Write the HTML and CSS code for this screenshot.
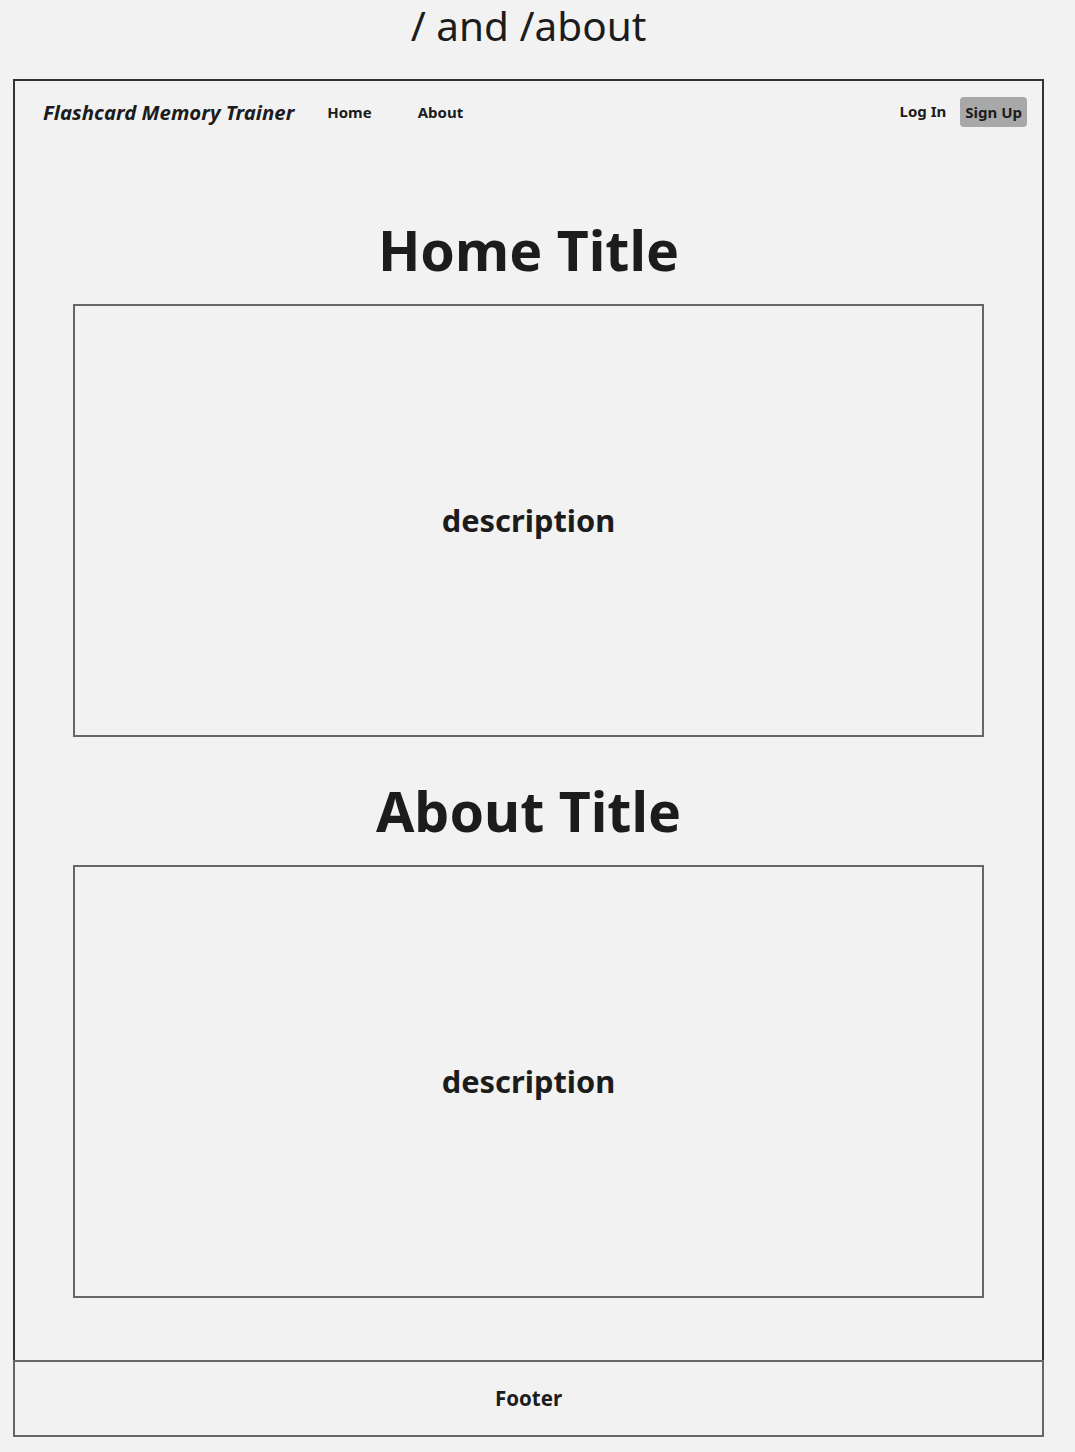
FILE: index.html
```html
<!DOCTYPE html>
<html>
<head>
<meta charset="utf-8">
<link rel="stylesheet" href="styles.css">
</head>
<body>
<div class="page-label">/ and /about</div>
<div class="frame">
  <nav class="nav">
    <div class="nav-left">
      <span class="brand">Flashcard Memory Trainer</span>
      <a class="nav-link">Home</a>
      <a class="nav-link">About</a>
    </div>
    <div class="nav-right">
      <a class="login">Log In</a>
      <a class="signup">Sign Up</a>
    </div>
  </nav>
  <main class="main">
    <section class="section">
      <h2 class="title">Home Title</h2>
      <div class="box">description</div>
    </section>
    <section class="section">
      <h2 class="title">About Title</h2>
      <div class="box">description</div>
    </section>
  </main>
</div>
<footer class="footer">Footer</footer>
</body>
</html>
```
FILE: styles.css
```css
html, body {
  margin: 0;
  padding: 0;
  background: #f2f2f2;
  font-family: "Noto Sans", "Open Sans", sans-serif;
  color: #1c1c1c;
}
.page-label {
  margin: 0 31px 0 13px;
  height: 79px;
  text-align: center;
  font-size: 40.5px;
  line-height: 52px;
  font-weight: 400;
  box-sizing: border-box;
}
.frame {
  margin: 0 31px 0 13px;
  border: 2px solid #333;
  border-bottom: none;
  padding-bottom: 62px;
}
.nav {
  height: 62px;
  display: flex;
  align-items: center;
  justify-content: space-between;
  padding: 0 15px 0 28px;
}
.nav-left {
  display: flex;
  align-items: center;
}
.brand {
  font-size: 20.4px;
  font-weight: 700;
  font-style: italic;
  margin-right: 33px;
}
.nav-link {
  font-size: 15px;
  font-weight: 700;
  margin-right: 46px;
}
.nav-right {
  display: flex;
  align-items: center;
  gap: 14px;
}
.login {
  font-size: 15px;
  font-weight: 700;
  margin-top: -2px;
}
.signup {
  font-size: 15px;
  font-weight: 700;
  background: #a8a8a8;
  border-radius: 4px;
  padding: 4px 5px;
  line-height: 22px;
}
.main {
  padding: 67px 58px 0 58px;
  display: flex;
  flex-direction: column;
  gap: 34px;
}
.section {
  display: flex;
  flex-direction: column;
  gap: 14px;
}
.title {
  margin: 0;
  height: 80px;
  line-height: 80px;
  text-align: center;
  font-size: 55.5px;
  font-weight: 700;
}
.box {
  height: 433px;
  box-sizing: border-box;
  border: 2px solid #666;
  display: flex;
  align-items: center;
  justify-content: center;
  font-size: 30.8px;
  font-weight: 700;
  padding-bottom: 1px;
}
.footer {
  margin: 0 31px 0 13px;
  height: 77px;
  box-sizing: border-box;
  border: 2px solid #666;
  display: flex;
  align-items: center;
  justify-content: center;
  font-size: 20.5px;
  font-weight: 700;
  padding-bottom: 1px;
}
```
